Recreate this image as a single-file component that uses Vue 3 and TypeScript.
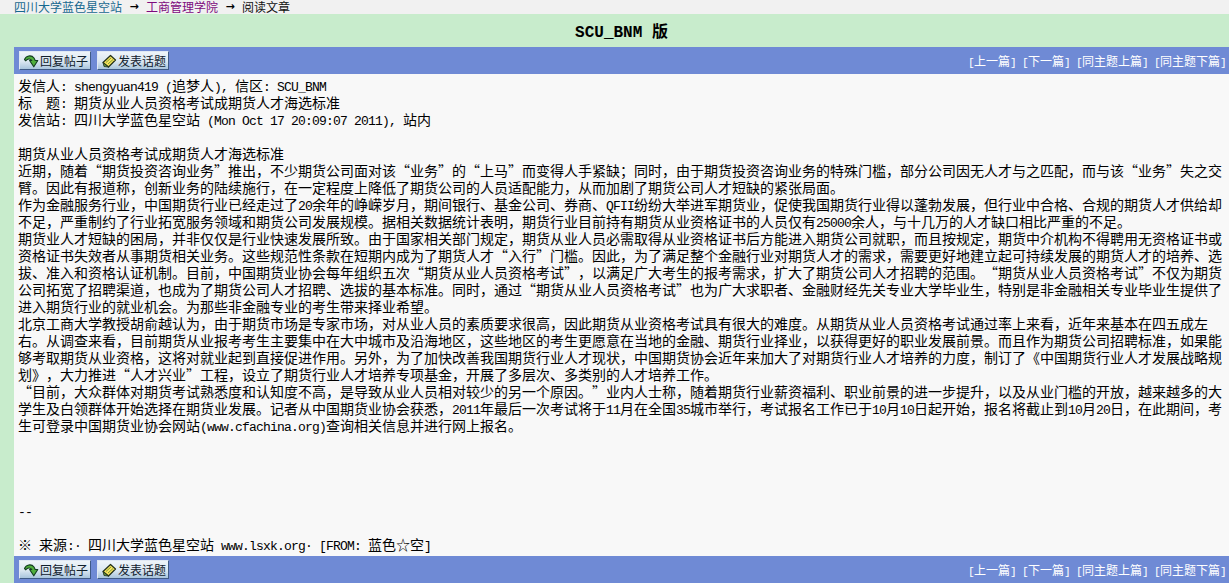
<template>
  <div class="page" lang="zh-CN">
    <div class="crumbs">
      <a class="site" href="#">四川大学蓝色星空站</a>
      <span class="arrow">→</span>
      <a class="board" href="#">工商管理学院</a>
      <span class="arrow">→</span>
      <span>阅读文章</span>
    </div>

    <div class="main">
      <h1 class="title">
        <span class="en">SCU_BNM </span>版
      </h1>

      <div class="toolbar">
        <div class="buttons">
          <a class="btn" href="#">
            <svg class="ico" viewBox="0 0 16 16" width="16" height="16">
              <path d="M1.5 6.5 C3 2.5 8.5 1.5 11 5 L12.2 7.5 L14.8 7.5 L10.8 13.8 L6.6 7.5 L8.8 7.5 C7.5 5.5 4.5 5.3 2.8 7.8 Z" fill="#4fae3c" stroke="#123c22" stroke-width="1.1" stroke-linejoin="round" />
            </svg>
            回复帖子
          </a>
          <a class="btn" href="#">
            <svg class="ico" viewBox="0 0 16 16" width="16" height="16">
              <path d="M2 9.5 L9.5 2.5 L14.5 7 L7.5 14 Z" fill="#f7e35a" stroke="#22301a" stroke-width="1.2" stroke-linejoin="round" />
              <path d="M5 9.5 L10 5 M7 11 L12 6.5" stroke="#7f9a3a" stroke-width="1" />
              <path d="M2 9.5 L7.5 14 L3 13.5 Z" fill="#5f8f3a" stroke="#22301a" stroke-width="0.8" />
            </svg>
            发表话题
          </a>
        </div>
        <div class="pager">
          <a v-for="item in pager" :key="item" href="#"><span class="en">[</span>{{ item }}<span class="en">]</span></a>
        </div>
      </div>

      <div class="article">
        <div v-for="(line, i) in lines" :key="i" class="line">
          <template v-for="(run, j) in splitRuns(line)" :key="j">
            <span v-if="j % 2" class="en">{{ run }}</span>
            <template v-else>{{ run }}</template>
          </template>
        </div>
      </div>

      <div class="toolbar">
        <div class="buttons">
          <a class="btn" href="#">
            <svg class="ico" viewBox="0 0 16 16" width="16" height="16">
              <path d="M1.5 6.5 C3 2.5 8.5 1.5 11 5 L12.2 7.5 L14.8 7.5 L10.8 13.8 L6.6 7.5 L8.8 7.5 C7.5 5.5 4.5 5.3 2.8 7.8 Z" fill="#4fae3c" stroke="#123c22" stroke-width="1.1" stroke-linejoin="round" />
            </svg>
            回复帖子
          </a>
          <a class="btn" href="#">
            <svg class="ico" viewBox="0 0 16 16" width="16" height="16">
              <path d="M2 9.5 L9.5 2.5 L14.5 7 L7.5 14 Z" fill="#f7e35a" stroke="#22301a" stroke-width="1.2" stroke-linejoin="round" />
              <path d="M5 9.5 L10 5 M7 11 L12 6.5" stroke="#7f9a3a" stroke-width="1" />
              <path d="M2 9.5 L7.5 14 L3 13.5 Z" fill="#5f8f3a" stroke="#22301a" stroke-width="0.8" />
            </svg>
            发表话题
          </a>
        </div>
        <div class="pager">
          <a v-for="item in pager" :key="item" href="#"><span class="en">[</span>{{ item }}<span class="en">]</span></a>
        </div>
      </div>
    </div>
  </div>
</template>

<script setup lang="ts">
const pager = ['上一篇', '下一篇', '同主题上篇', '同主题下篇']

const header: string[] = [
  '发信人: shengyuan419 (追梦人), 信区: SCU_BNM',
  '标  题: 期货从业人员资格考试成期货人才海选标准',
  '发信站: 四川大学蓝色星空站 (Mon Oct 17 20:09:07 2011), 站内',
  '',
]

// 每行按原页面的折行写死
const body: string[] = [
  '期货从业人员资格考试成期货人才海选标准',
  '近期,随着“期货投资咨询业务”推出,不少期货公司面对该“业务”的“上马”而变得人手紧缺;同时,由于期货投资咨询业务的特殊门槛,部分公司因无人才与之匹配,而与该“业务”失之交',
  '臂。因此有报道称,创新业务的陆续施行,在一定程度上降低了期货公司的人员适配能力,从而加剧了期货公司人才短缺的紧张局面。',
  '作为金融服务行业,中国期货行业已经走过了20余年的峥嵘岁月,期间银行、基金公司、券商、QFII纷纷大举进军期货业,促使我国期货行业得以蓬勃发展,但行业中合格、合规的期货人才供给却',
  '不足,严重制约了行业拓宽服务领域和期货公司发展规模。据相关数据统计表明,期货行业目前持有期货从业资格证书的人员仅有25000余人,与十几万的人才缺口相比严重的不足。',
  '期货业人才短缺的困局,并非仅仅是行业快速发展所致。由于国家相关部门规定,期货从业人员必需取得从业资格证书后方能进入期货公司就职,而且按规定,期货中介机构不得聘用无资格证书或',
  '资格证书失效者从事期货相关业务。这些规范性条款在短期内成为了期货人才“入行”门槛。因此,为了满足整个金融行业对期货人才的需求,需要更好地建立起可持续发展的期货人才的培养、选',
  '拔、准入和资格认证机制。目前,中国期货业协会每年组织五次“期货从业人员资格考试”,以满足广大考生的报考需求,扩大了期货公司人才招聘的范围。“期货从业人员资格考试”不仅为期货',
  '公司拓宽了招聘渠道,也成为了期货公司人才招聘、选拔的基本标准。同时,通过“期货从业人员资格考试”也为广大求职者、金融财经先关专业大学毕业生,特别是非金融相关专业毕业生提供了',
  '进入期货行业的就业机会。为那些非金融专业的考生带来择业希望。',
  '北京工商大学教授胡俞越认为,由于期货市场是专家市场,对从业人员的素质要求很高,因此期货从业资格考试具有很大的难度。从期货从业人员资格考试通过率上来看,近年来基本在四五成左',
  '右。从调查来看,目前期货从业报考考生主要集中在大中城市及沿海地区,这些地区的考生更愿意在当地的金融、期货行业择业,以获得更好的职业发展前景。而且作为期货公司招聘标准,如果能',
  '够考取期货从业资格,这将对就业起到直接促进作用。另外,为了加快改善我国期货行业人才现状,中国期货协会近年来加大了对期货行业人才培养的力度,制订了《中国期货行业人才发展战略规',
  '划》,大力推进“人才兴业”工程,设立了期货行业人才培养专项基金,开展了多层次、多类别的人才培养工作。',
  '“目前,大众群体对期货考试熟悉度和认知度不高,是导致从业人员相对较少的另一个原因。”业内人士称,随着期货行业薪资福利、职业前景的进一步提升,以及从业门槛的开放,越来越多的大',
  '学生及白领群体开始选择在期货业发展。记者从中国期货业协会获悉,2011年最后一次考试将于11月在全国35城市举行,考试报名工作已于10月10日起开始,报名将截止到10月20日,在此期间,考',
  '生可登录中国期货业协会网站(www.cfachina.org)查询相关信息并进行网上报名。',
].map((s) => s.replace(/,/g, '\uff0c').replace(/;/g, '\uff1b'))

const footer: string[] = [
  '',
  '',
  '',
  '',
  '--',
  '',
  '※ 来源:· 四川大学蓝色星空站 www.lsxk.org· [FROM: 蓝色☆空]',
]

const lines = [...header, ...body, ...footer]

// 奇数下标是半角内容,走等宽字体,宽度正好是汉字的一半
function splitRuns(line: string): string[] {
  return line.split(/([\x20-\x7e\u00b7]+)/)
}
</script>

<style scoped>
.page {
  height: 583px;
  overflow: hidden;
  font-family: "Noto Sans CJK SC", sans-serif;
  color: #000;
}

.en {
  font-family: "Liberation Mono", monospace;
  font-size: 0.93em;
  letter-spacing: -0.0624em;
  white-space: pre;
}

.crumbs {
  display: flex;
  align-items: center;
  gap: 6px;
  height: 14px;
  padding-left: 14px;
  background: #f1f1f1;
  font-size: 12px;
  line-height: 14px;
  color: #111;
}

.crumbs a {
  text-decoration: none;
}

.site {
  color: #17688f;
}

.board {
  color: #7d0a7d;
}

.arrow {
  font-family: "DejaVu Sans", sans-serif;
  font-size: 11px;
  font-weight: bold;
  width: 12px;
  text-align: center;
  color: #000;
}

.main {
  margin-left: 14px;
}

.title {
  margin: 0;
  height: 33px;
  font-size: 16px;
  font-weight: bold;
  line-height: 33px;
  text-align: center;
}

.title .en {
  font-size: 16px;
  letter-spacing: 0;
}

.toolbar {
  display: flex;
  justify-content: space-between;
  align-items: center;
  height: 27px;
  padding: 0 3px 0 5px;
  background: #6f8ad5;
}

.buttons {
  display: flex;
  gap: 6px;
}

.btn {
  display: flex;
  align-items: center;
  gap: 1px;
  box-sizing: border-box;
  width: 72px;
  height: 19px;
  padding-left: 3px;
  border: 1px solid;
  border-color: #dfe8f4 #3f5a86 #3f5a86 #dfe8f4;
  background: linear-gradient(#eef4f9, #dbe7f1 55%, #a9c5dd);
  font-size: 12px;
  color: #10202c;
  text-decoration: none;
  white-space: nowrap;
}

.ico {
  flex: none;
}

.pager {
  display: flex;
  gap: 6px;
  font-size: 12px;
  color: #fff;
  white-space: pre;
}

.pager a {
  color: #fff;
  text-decoration: none;
}

.article {
  padding: 3px 0 3px 4px;
  background: #f8f8f8;
  font-size: 14px;
  white-space: pre;
  text-spacing-trim: space-all;
}

.line {
  height: 17px;
  line-height: 17px;
}
</style>

<style>
body {
  background: #c8eccc;
}
</style>
